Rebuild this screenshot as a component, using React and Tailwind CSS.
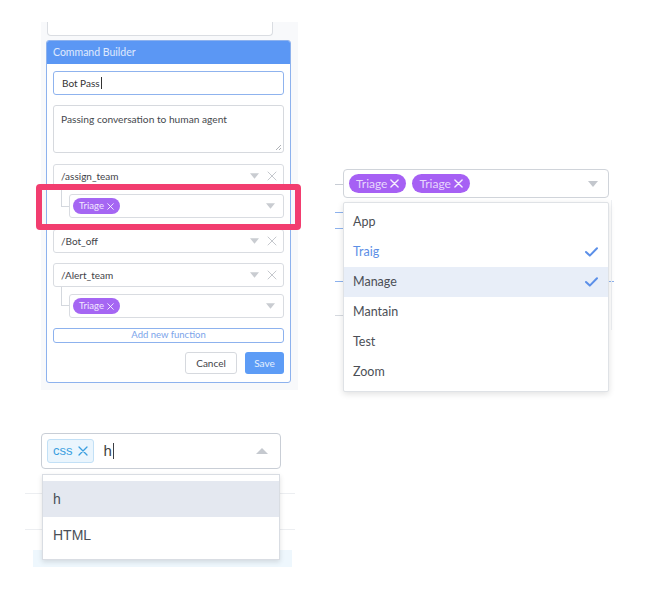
import React from 'react';

const lato = { fontFamily: 'Lato, "Open Sans", sans-serif' };

const Caret = ({ className = '' }) => (
    <svg className={className} width="10" height="6" viewBox="0 0 10 6">
        <path d="M0 0 L10 0 L5 6 Z" fill="currentColor" />
    </svg>
);

const Cross = ({ size = 10, stroke = 1.2, className = '' }) => (
    <svg className={className} width={size} height={size} viewBox="0 0 10 10">
        <path d="M1 1 L9 9 M9 1 L1 9" stroke="currentColor" strokeWidth={stroke} fill="none" strokeLinecap="round" />
    </svg>
);

const Check = () => (
    <svg width="13" height="10" viewBox="0 0 13 10">
        <path d="M1 5 L4.8 8.6 L12 1.2" stroke="#5b8fe8" strokeWidth="2" fill="none" strokeLinecap="round" strokeLinejoin="round" />
    </svg>
);

const Pill = () => (
    <span className="flex items-center gap-[3px] h-[16px] px-[6px] rounded-full bg-[#a566f3] text-[9.5px] text-white/85">
        Triage <Cross size={7} stroke={1.4} />
    </span>
);

const CommandRow = ({ label }) => (
    <div className="flex items-center h-[24px] border border-[#d9dce1] rounded-[3px] bg-white pl-[7px] pr-[6px]">
        <span className="flex-1 text-[10px] text-[#3f4348]">{label}</span>
        <Caret className="text-[#c9ccd1] mr-[8px] w-[9px]" />
        <Cross size={10} stroke={1} className="text-[#c5c8cd]" />
    </div>
);

const ChildSelect = ({ gap }) => (
    <div className={`relative pl-[16px] ${gap}`}>
        <div className="absolute left-[8px] top-0 w-[8px] h-[19px] border-l border-b border-[#d4d8de]" />
        <div className="flex items-center h-[24px] border border-[#d9dce1] rounded-[3px] bg-white pl-[3px] pr-[8px]">
            <div className="flex-1 flex"><Pill /></div>
            <Caret className="text-[#c9ccd1] w-[9px]" />
        </div>
    </div>
);

const CommandBuilder = () => (
    <div className="relative ml-[41px] mt-[22px] w-[257px] h-[368px] bg-[#f8f9fb]" style={lato}>
        <div className="ml-[6px] w-[226px] h-[14px] bg-white border border-t-0 border-[#dadde2] rounded-b-[4px]" />
        <div className="ml-[5px] mt-[4px] w-[245px] border border-[#8db2ee] rounded-[3px] bg-white overflow-hidden">
            <div className="h-[23px] bg-[#5b97f4] flex items-center pl-[6px] text-[10.5px] text-white/80">
                Command Builder
            </div>
            <div className="px-[6px] pt-[7px] pb-[8px]">
                <div className="flex items-center h-[24px] border border-[#8fb3ee] rounded-[3px] pl-[8px] text-[10px] text-[#333]">
                    Bot Pass<span className="ml-[1px] w-px h-[12px] bg-[#333]" />
                </div>
                <div className="relative mt-[10px] h-[48px] border border-[#d6d9de] rounded-[3px] pl-[7px] pt-[6px] text-[10.2px] text-[#46494e]">
                    Passing conversation to human agent
                    <svg className="absolute right-[2px] bottom-[2px]" width="6" height="6" viewBox="0 0 6 6">
                        <path d="M6 1 L1 6 M6 4 L4 6" stroke="#9a9ea4" strokeWidth="0.8" />
                    </svg>
                </div>
                <div className="mt-[11px]"><CommandRow label="/assign_team" /></div>
                <ChildSelect gap="pt-[6px]" />
                <div className="mt-[11px]"><CommandRow label="/Bot_off" /></div>
                <div className="mt-[10px]"><CommandRow label="/Alert_team" /></div>
                <ChildSelect gap="pt-[7px]" />
                <div className="mt-[10px] h-[15px] border border-[#8db2ee] rounded-[3px] flex items-center justify-center text-[9.5px] text-[#7ba4ea]">
                    Add new function
                </div>
                <div className="mt-[9px] flex justify-end gap-[8px]">
                    <div className="w-[52px] h-[22px] border border-[#d6d9de] rounded-[3px] flex items-center justify-center text-[10px] text-[#3f4348]">
                        Cancel
                    </div>
                    <div className="w-[39px] h-[22px] bg-[#5d9cf6] rounded-[3px] flex items-center justify-center text-[10px] text-white/85">
                        Save
                    </div>
                </div>
            </div>
        </div>
        <div className="absolute left-[-5px] top-[162px] w-[265px] h-[46px] border-[6px] border-[#f23d6f] rounded-[4px]" />
    </div>
);

const TagPill = () => (
    <span className="flex items-center gap-[3px] h-[19px] px-[7px] rounded-full bg-[#a660f4] text-[12px] text-white/75">
        Triage <Cross size={9} stroke={1.5} className="text-white/90" />
    </span>
);

const options = [
    { label: 'App' },
    { label: 'Traig', selected: true },
    { label: 'Manage', selected: true, active: true },
    { label: 'Mantain' },
    { label: 'Test' },
    { label: 'Zoom' },
];

const MultiSelect = () => (
    <div className="relative ml-[37px] mt-[160px] w-[279px] h-[230px]" style={lato}>
        {/* leftovers of the card behind */}
        <div className="absolute left-0 top-[24px] w-[8px] h-px bg-[#c8cdd5]" />
        <div className="absolute left-0 top-[52px] w-[8px] h-px bg-[#8db2ee]" />
        <div className="absolute left-0 top-[68px] w-[8px] h-px bg-[#8db2ee]" />
        <div className="absolute left-0 top-[121px] w-[8px] h-px bg-[#8db2ee]" />
        <div className="absolute left-[274px] top-[121px] w-[5px] h-px bg-[#8db2ee]" />
        <div className="absolute left-0 top-[155px] w-[8px] h-px bg-[#d5d9df]" />
        <div className="absolute left-[276px] top-[40px] w-px h-[130px] bg-[#eef0f3]" />

        <div className="absolute left-[8px] top-[9px] w-[266px] h-[29px] bg-white border border-[#d0d4da] rounded-[4px] flex items-center pl-[5px] pr-[10px] gap-[6px]">
            <TagPill />
            <TagPill />
            <div className="flex-1" />
            <Caret className="text-[#c3c7cd] w-[10px]" />
        </div>
        <div className="absolute left-[8px] top-[42px] w-[266px] bg-white border border-[#dfe2e6] rounded-[2px] shadow-[0_2px_6px_rgba(0,0,0,0.12)] pt-[4px] pb-[4px]">
            {options.map(o => (
                <div key={o.label} className={`h-[30px] flex items-center pl-[9px] pr-[10px] text-[12.5px] ${o.active ? 'bg-[#e8eef8]' : ''} ${o.selected && !o.active ? 'text-[#5c8fe6]' : 'text-[#4b4f56]'}`}>
                    <span className="flex-1">{o.label}</span>
                    {o.selected && <Check />}
                </div>
            ))}
        </div>
    </div>
);

const TagInput = () => (
    <div className="relative ml-[25px] mt-[43px] w-[270px] h-[136px]" style={{ fontFamily: '"Liberation Sans", Arial, sans-serif' }}>
        <div className="absolute left-0 top-[60px] w-[270px] h-px bg-[#eceef1]" />
        <div className="absolute left-0 top-[96px] w-[270px] h-px bg-[#eceef1]" />
        <div className="absolute left-[8px] top-[117px] w-[259px] h-[17px] bg-[#eef7fd]" />

        <div className="absolute left-[16px] top-0 w-[240px] h-[36px] bg-white border border-[#c9ced6] rounded-[4px] flex items-center pl-[5px] pr-[12px]">
            <span className="flex items-center gap-[5px] h-[24px] px-[5px] bg-[#eaf5fd] border border-[#c2e0f6] rounded-[3px] text-[13px] text-[#3b9fe0]">
                css <Cross size={10} stroke={1.3} />
            </span>
            <span className="ml-[10px] text-[15px] text-[#3c3f44]">h</span>
            <span className="ml-[1px] w-px h-[16px] bg-[#3c3f44]" />
            <div className="flex-1" />
            <svg width="12" height="6" viewBox="0 0 12 6">
                <path d="M0 6 L6 0 L12 6 Z" fill="#c5c9cf" />
            </svg>
        </div>
        <div className="absolute left-[17px] top-[41px] w-[238px] bg-white border border-[#d9dde3] shadow-[0_2px_5px_rgba(0,0,0,0.12)] pt-[6px] pb-[6px]">
            <div className="h-[36px] bg-[#e4e8f0] flex items-center pl-[10px] text-[14px] text-[#4a4f57]">h</div>
            <div className="h-[36px] flex items-center pl-[10px] text-[14px] text-[#4a4f57]">HTML</div>
        </div>
    </div>
);

const App = () => (
    <div className="w-[659px] h-[595px] bg-white overflow-hidden">
        <div className="flex items-start">
            <CommandBuilder />
            <MultiSelect />
        </div>
        <TagInput />
    </div>
);

export default App;
